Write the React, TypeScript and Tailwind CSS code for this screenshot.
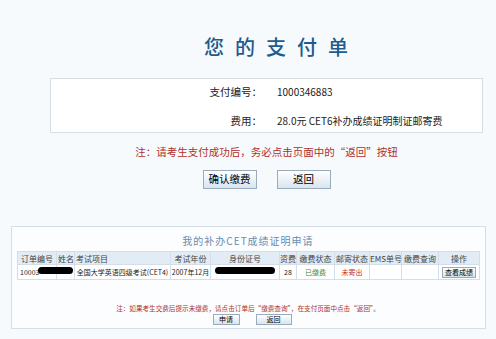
const cols = [
  { label: "订单编号", w: "w-[39px]", align: "text-left pl-[3px]" },
  { label: "姓名", w: "w-[18px]", align: "text-left pl-[1px]" },
  { label: "考试项目", w: "w-[96px]", align: "text-left pl-[1px]" },
  { label: "考试年份", w: "w-[40px]", align: "text-center" },
  { label: "身份证号", w: "w-[69px]", align: "text-center" },
  { label: "资费", w: "w-[17px]", align: "text-center" },
  { label: "缴费状态", w: "w-[38px]", align: "text-center" },
  { label: "邮寄状态", w: "w-[35px]", align: "text-center" },
  { label: "EMS单号", w: "w-[32px]", align: "text-center" },
  { label: "缴费查询", w: "w-[37px]", align: "text-center" },
  { label: "操作", w: "w-[41px]", align: "text-center" },
];

const btn =
  "border border-[#9aabbb] bg-gradient-to-b from-white to-[#d8e5ef] text-black leading-none";

export default function App() {
  return (
    <div className="min-h-[339px] bg-[#f6fafd] font-['Noto_Sans_CJK_SC','Noto_Sans',sans-serif] text-[#222]">
      <div className="ml-[50px] w-[433px] pt-[35px]">
        <h1 className="pl-[30px] text-center text-[20px] font-medium leading-[24px] tracking-[11px] text-[#1f5b8e]">
          您的支付单
        </h1>

        <div className="mt-[19px] border border-[#d6dde3] bg-white pt-[7px] pb-[5px] text-[10.5px] leading-[12px]">
          <div className="flex">
            <span className="w-[211px] text-right">支付编号：</span>
            <span className="ml-[15px] text-[10px]">1000346883</span>
          </div>
          <div className="mt-[17px] flex">
            <span className="w-[211px] text-right">费用：</span>
            <span className="ml-[15px] text-[10px]">28.0元 CET6补办成绩证明制证邮寄费</span>
          </div>
        </div>

        <p className="mt-[12px] text-center text-[10.5px] leading-[14px] text-[#b0302c]">
          注：请考生支付成功后，务必点击页面中的“返回”按钮
        </p>

        <div className="mt-[11px] flex justify-center gap-[20px]">
          <button className={`${btn} h-[19px] w-[54px] text-[10.5px]`}>确认缴费</button>
          <button className={`${btn} h-[19px] w-[54px] text-[10.5px]`}>返回</button>
        </div>
      </div>

      <div className="ml-[11px] mt-[37px] w-[475px] border border-[#d5dde5] bg-[#fbfdfe] pt-[7px] pb-[3px] pl-[5px] pr-[6px]">
        <p className="text-center text-[10px] leading-[14px] tracking-[1px] text-[#6a8cae]">
          我的补办CET成绩证明申请
        </p>

        <div className="relative mt-[3px]">
          <table className="w-[462px] table-fixed border-collapse text-[8px]">
            <thead>
              <tr className="h-[13px] bg-[#e2ecf5]">
                {cols.map((c) => (
                  <th
                    key={c.label}
                    className={`${c.w} ${c.align} border border-[#d3dee8] p-0 font-normal leading-[11px] text-[#444] whitespace-nowrap`}
                  >
                    {c.label}
                  </th>
                ))}
              </tr>
            </thead>
            <tbody>
              <tr className="h-[15px] bg-white text-[7px] leading-[9px]">
                <td className="border border-[#d3dee8] p-0 pl-[2px] text-left">10003</td>
                <td className="border border-[#d3dee8] p-0"></td>
                <td className="border border-[#d3dee8] p-0 text-center whitespace-nowrap">全国大学英语四级考试(CET4)</td>
                <td className="border border-[#d3dee8] p-0 text-center whitespace-nowrap">2007年12月</td>
                <td className="border border-[#d3dee8] p-0"></td>
                <td className="border border-[#d3dee8] p-0 text-center">28</td>
                <td className="border border-[#d3dee8] p-0 text-center text-[#3b8a3b]">已缴费</td>
                <td className="border border-[#d3dee8] p-0 text-center text-[#c0302c]">未寄出</td>
                <td className="border border-[#d3dee8] p-0"></td>
                <td className="border border-[#d3dee8] p-0"></td>
                <td className="border border-[#d3dee8] p-0 text-center">
                  <button className={`${btn} h-[11px] w-[34px] text-[7px]`}>查看成绩</button>
                </td>
              </tr>
            </tbody>
          </table>
          <div className="absolute left-[21px] top-[16px] h-[7px] w-[35px] rounded-full bg-black" />
          <div className="absolute left-[198px] top-[16px] h-[7px] w-[60px] rounded-full bg-black" />
        </div>

        <p className="mt-[24px] text-center text-[6.6px] leading-[9px] text-[#b0302c] whitespace-nowrap">
          注：如果考生交费后提示未缴费，请点击订单后“缴费查询”，在支付页面中点击“返回”。
        </p>

        <div className="mt-[1px] ml-[8px] flex justify-center gap-[16px]">
          <button className={`${btn} h-[11px] w-[27px] text-[7px]`}>申请</button>
          <button className={`${btn} h-[11px] w-[36px] text-[7px]`}>返回</button>
        </div>
      </div>
    </div>
  );
}
